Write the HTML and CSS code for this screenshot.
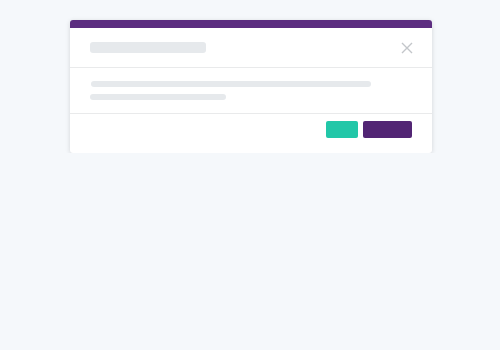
FILE: index.html
```html
<!DOCTYPE html>
<html>
<head>
<meta charset="utf-8" />
<title>Modal</title>
<link rel="stylesheet" href="styles.css">
</head>
<body>
<div class="modal">
	<div class="modal-bar"></div>
	<div class="modal-head">
		<div class="ph ph-title"></div>
		<svg class="close" width="12" height="12" viewBox="0 0 12 12"><path d="M1 1L11 11M11 1L1 11" stroke="#c3c6ca" stroke-width="1.4" fill="none"/></svg>
	</div>
	<div class="modal-body">
		<div class="ph ph-line1"></div>
		<div class="ph ph-line2"></div>
	</div>
	<div class="modal-foot">
		<div class="btn btn-teal"></div>
		<div class="btn btn-purple"></div>
	</div>
</div>
</body>
</html>
```
FILE: styles.css
```css
body {
	margin: 0;
	padding-top: 20px;
	background: #f5f8fb;
	font-family: "Liberation Sans", Arial, sans-serif;
}
.modal {
	width: 362px;
	margin-left: 70px;
	background: #fff;
	border-radius: 3px;
	box-shadow: 0 1px 5px rgba(0, 0, 0, 0.14);
	overflow: hidden;
}
.modal-bar {
	height: 8px;
	background: #5c2d80;
}
.modal-head {
	height: 39px;
	padding: 0 20px 0 20px;
	display: flex;
	align-items: center;
	justify-content: space-between;
	border-bottom: 1px solid #e9eaeb;
}
.ph {
	background: #e6e9ec;
	border-radius: 3px;
}
.ph-title {
	width: 116px;
	height: 11px;
}
.close {
	display: block;
	margin-right: -1px;
}
.modal-body {
	padding: 13px 20px 13px 20px;
	border-bottom: 1px solid #e9eaeb;
}
.ph-line1 {
	width: 280px;
	height: 6px;
	margin-left: 1px;
}
.ph-line2 {
	width: 136px;
	height: 6px;
	margin-top: 7px;
}
.modal-foot {
	padding: 7px 20px 15px 20px;
	display: flex;
	justify-content: flex-end;
	gap: 5px;
}
.btn {
	height: 17px;
	border-radius: 2px;
}
.btn-teal {
	width: 32px;
	background: #22c7a8;
}
.btn-purple {
	width: 49px;
	background: #522574;
}
```
